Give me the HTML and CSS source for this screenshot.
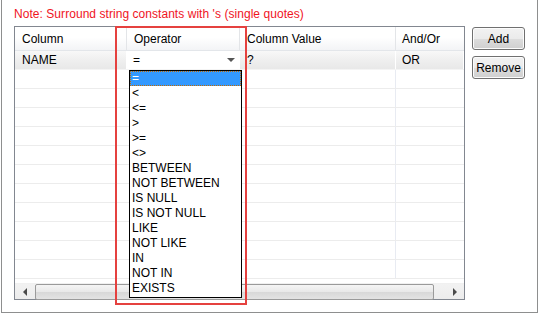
FILE: index.html
```html
<!DOCTYPE html>
<html>
<head>
  <meta charset="utf-8">
  <title>Where Conditions</title>
  <link rel="stylesheet" href="styles.css">
</head>
<body>
  <div class="window">
    <p class="note">Note: Surround string constants with 's (single quotes)</p>

    <div class="main">
      <div class="grid">
        <div class="grid-head">
          <div class="cell c1">Column</div>
          <div class="cell c2">Operator</div>
          <div class="cell c3">Column Value</div>
          <div class="cell c4">And/Or</div>
        </div>

        <div class="grid-body">
          <div class="row row-active">
            <div class="cell c1">NAME</div>
            <div class="cell c2 combo">
              <span>=</span>
              <span class="combo-arrow"></span>
            </div>
            <div class="cell c3">?</div>
            <div class="cell c4">OR</div>
          </div>
          <div class="row"><div class="cell c1"></div><div class="cell c2"></div><div class="cell c3"></div><div class="cell c4"></div></div>
          <div class="row"><div class="cell c1"></div><div class="cell c2"></div><div class="cell c3"></div><div class="cell c4"></div></div>
          <div class="row"><div class="cell c1"></div><div class="cell c2"></div><div class="cell c3"></div><div class="cell c4"></div></div>
          <div class="row"><div class="cell c1"></div><div class="cell c2"></div><div class="cell c3"></div><div class="cell c4"></div></div>
          <div class="row"><div class="cell c1"></div><div class="cell c2"></div><div class="cell c3"></div><div class="cell c4"></div></div>
          <div class="row"><div class="cell c1"></div><div class="cell c2"></div><div class="cell c3"></div><div class="cell c4"></div></div>
          <div class="row"><div class="cell c1"></div><div class="cell c2"></div><div class="cell c3"></div><div class="cell c4"></div></div>
          <div class="row"><div class="cell c1"></div><div class="cell c2"></div><div class="cell c3"></div><div class="cell c4"></div></div>
          <div class="row"><div class="cell c1"></div><div class="cell c2"></div><div class="cell c3"></div><div class="cell c4"></div></div>
          <div class="row"><div class="cell c1"></div><div class="cell c2"></div><div class="cell c3"></div><div class="cell c4"></div></div>
          <div class="row"><div class="cell c1"></div><div class="cell c2"></div><div class="cell c3"></div><div class="cell c4"></div></div>
        </div>

        <div class="hscroll">
          <div class="scroll-btn left"><span class="tri-left"></span></div>
          <div class="scroll-thumb"></div>
          <div class="scroll-btn right"><span class="tri-right"></span></div>
        </div>
      </div>

      <div class="buttons">
        <button class="btn">Add</button>
        <button class="btn">Remove</button>
      </div>
    </div>

    <!-- open operator list -->
    <ul class="dropdown">
      <li class="selected">=</li>
      <li>&lt;</li>
      <li>&lt;=</li>
      <li>&gt;</li>
      <li>&gt;=</li>
      <li>&lt;&gt;</li>
      <li>BETWEEN</li>
      <li>NOT BETWEEN</li>
      <li>IS NULL</li>
      <li>IS NOT NULL</li>
      <li>LIKE</li>
      <li>NOT LIKE</li>
      <li>IN</li>
      <li>NOT IN</li>
      <li>EXISTS</li>
    </ul>

    <!-- annotation box -->
    <div class="highlight"></div>
  </div>
</body>
</html>
```

FILE: styles.css
```css
* {
  margin: 0;
  padding: 0;
  box-sizing: border-box;
}

body {
  width: 540px;
  height: 315px;
  background: #fff;
  font-family: "Liberation Sans", Arial, sans-serif;
  font-size: 12px;
  color: #000;
  overflow: hidden;
}

.window {
  position: relative;
  margin-left: 1px;
  width: 537px;
  height: 313px;
  border-left: 1px solid #8e8f8f;
  border-right: 1px solid #8e8f8f;
  border-bottom: 1px solid #8e8f8f;
  padding: 6px 0 0 12px;
}

.note {
  color: #f0141e;
  height: 20px;
  line-height: 16px;
  letter-spacing: 0.05px;
}

.main {
  display: flex;
  gap: 7px;
}

/* table */
.grid {
  width: 451px;
  height: 274px;
  border: 1px solid #828790;
  display: flex;
  flex-direction: column;
  background: #fff;
}

.grid-head {
  display: flex;
  height: 24px;
  flex-shrink: 0;
  background: linear-gradient(#ffffff 0%, #ffffff 45%, #f3f4f6 100%);
  border-bottom: 1px solid #e3e6ea;
}

.grid-head .cell {
  line-height: 25px;
  border-right: 1px solid #e3e5e8;
}

.cell {
  padding-left: 7px;
  white-space: nowrap;
  overflow: hidden;
}

.c1 { width: 112px; }
.c2 { width: 113px; }
.c3 { width: 156px; padding-left: 7px; }
.c4 { width: 68px; padding-left: 6px; }

.grid-head .c4,
.row .c4 {
  border-right: none;
}

.grid-body {
  flex: 1;
  overflow: hidden;
}

.row {
  display: flex;
  height: 19px;
  border-bottom: 1px solid #ececec;
}

.row .cell {
  line-height: 19px;
}

.row .c3 {
  border-right: 1px solid #e8ebf2;
}

.row-active {
  background: linear-gradient(#f8f8f8 0%, #efefef 50%, #e8e8e8 100%);
  border-bottom: 1px solid #f4f4f4;
}

.row-active .cell {
  border-right: 1px solid #ffffff;
}

.combo {
  background: #fff;
  display: flex;
  justify-content: space-between;
  align-items: center;
  padding-left: 6px;
  padding-right: 4px;
}

.combo-arrow {
  width: 0;
  height: 0;
  border-left: 4px solid transparent;
  border-right: 4px solid transparent;
  border-top: 4px solid #555;
}

/* horizontal scrollbar */
.hscroll {
  display: flex;
  height: 16px;
  flex-shrink: 0;
  background: linear-gradient(#f2f2f2, #ececec);
  border-top: 1px solid #f0f0f0;
}

.scroll-btn {
  display: flex;
  align-items: center;
  justify-content: center;
}

.scroll-btn.left { width: 20px; }
.scroll-btn.right { width: 30px; padding-left: 12px; }

.tri-left {
  border-top: 4px solid transparent;
  border-bottom: 4px solid transparent;
  border-right: 4px solid #4a4a4a;
}

.tri-right {
  border-top: 4px solid transparent;
  border-bottom: 4px solid transparent;
  border-left: 4px solid #4a4a4a;
}

.scroll-thumb {
  width: 399px;
  height: 16px;
  border: 1px solid #9a9a9a;
  border-radius: 2px;
  background: linear-gradient(#f5f5f5 0%, #e8e8e8 50%, #d8d8d8 51%, #e3e3e3 100%);
}

/* buttons */
.buttons {
  display: flex;
  flex-direction: column;
  gap: 6px;
  padding-top: 1px;
}

.btn {
  width: 53px;
  height: 23px;
  font-family: inherit;
  font-size: 12px;
  color: #000;
  border: 1px solid #707070;
  border-radius: 3px;
  background: linear-gradient(#f2f2f2 0%, #ebebeb 50%, #dddddd 51%, #cfcfcf 100%);
  box-shadow: inset 0 0 0 1px #fcfcfc;
}

/* dropdown list */
.dropdown {
  position: absolute;
  left: 127px;
  top: 70px;
  width: 113px;
  height: 228px;
  list-style: none;
  background: #fff;
  border: 1px solid #000;
}

.dropdown li {
  height: 15px;
  line-height: 15px;
  padding-left: 2px;
}

.dropdown li.selected {
  background: #3399ff;
  color: #fff;
  outline: 1px dotted #c46a00;
  outline-offset: -1px;
}

/* red annotation */
.highlight {
  position: absolute;
  left: 113px;
  top: 26px;
  width: 132px;
  height: 279px;
  border: 2px solid #e5413f;
}
```
